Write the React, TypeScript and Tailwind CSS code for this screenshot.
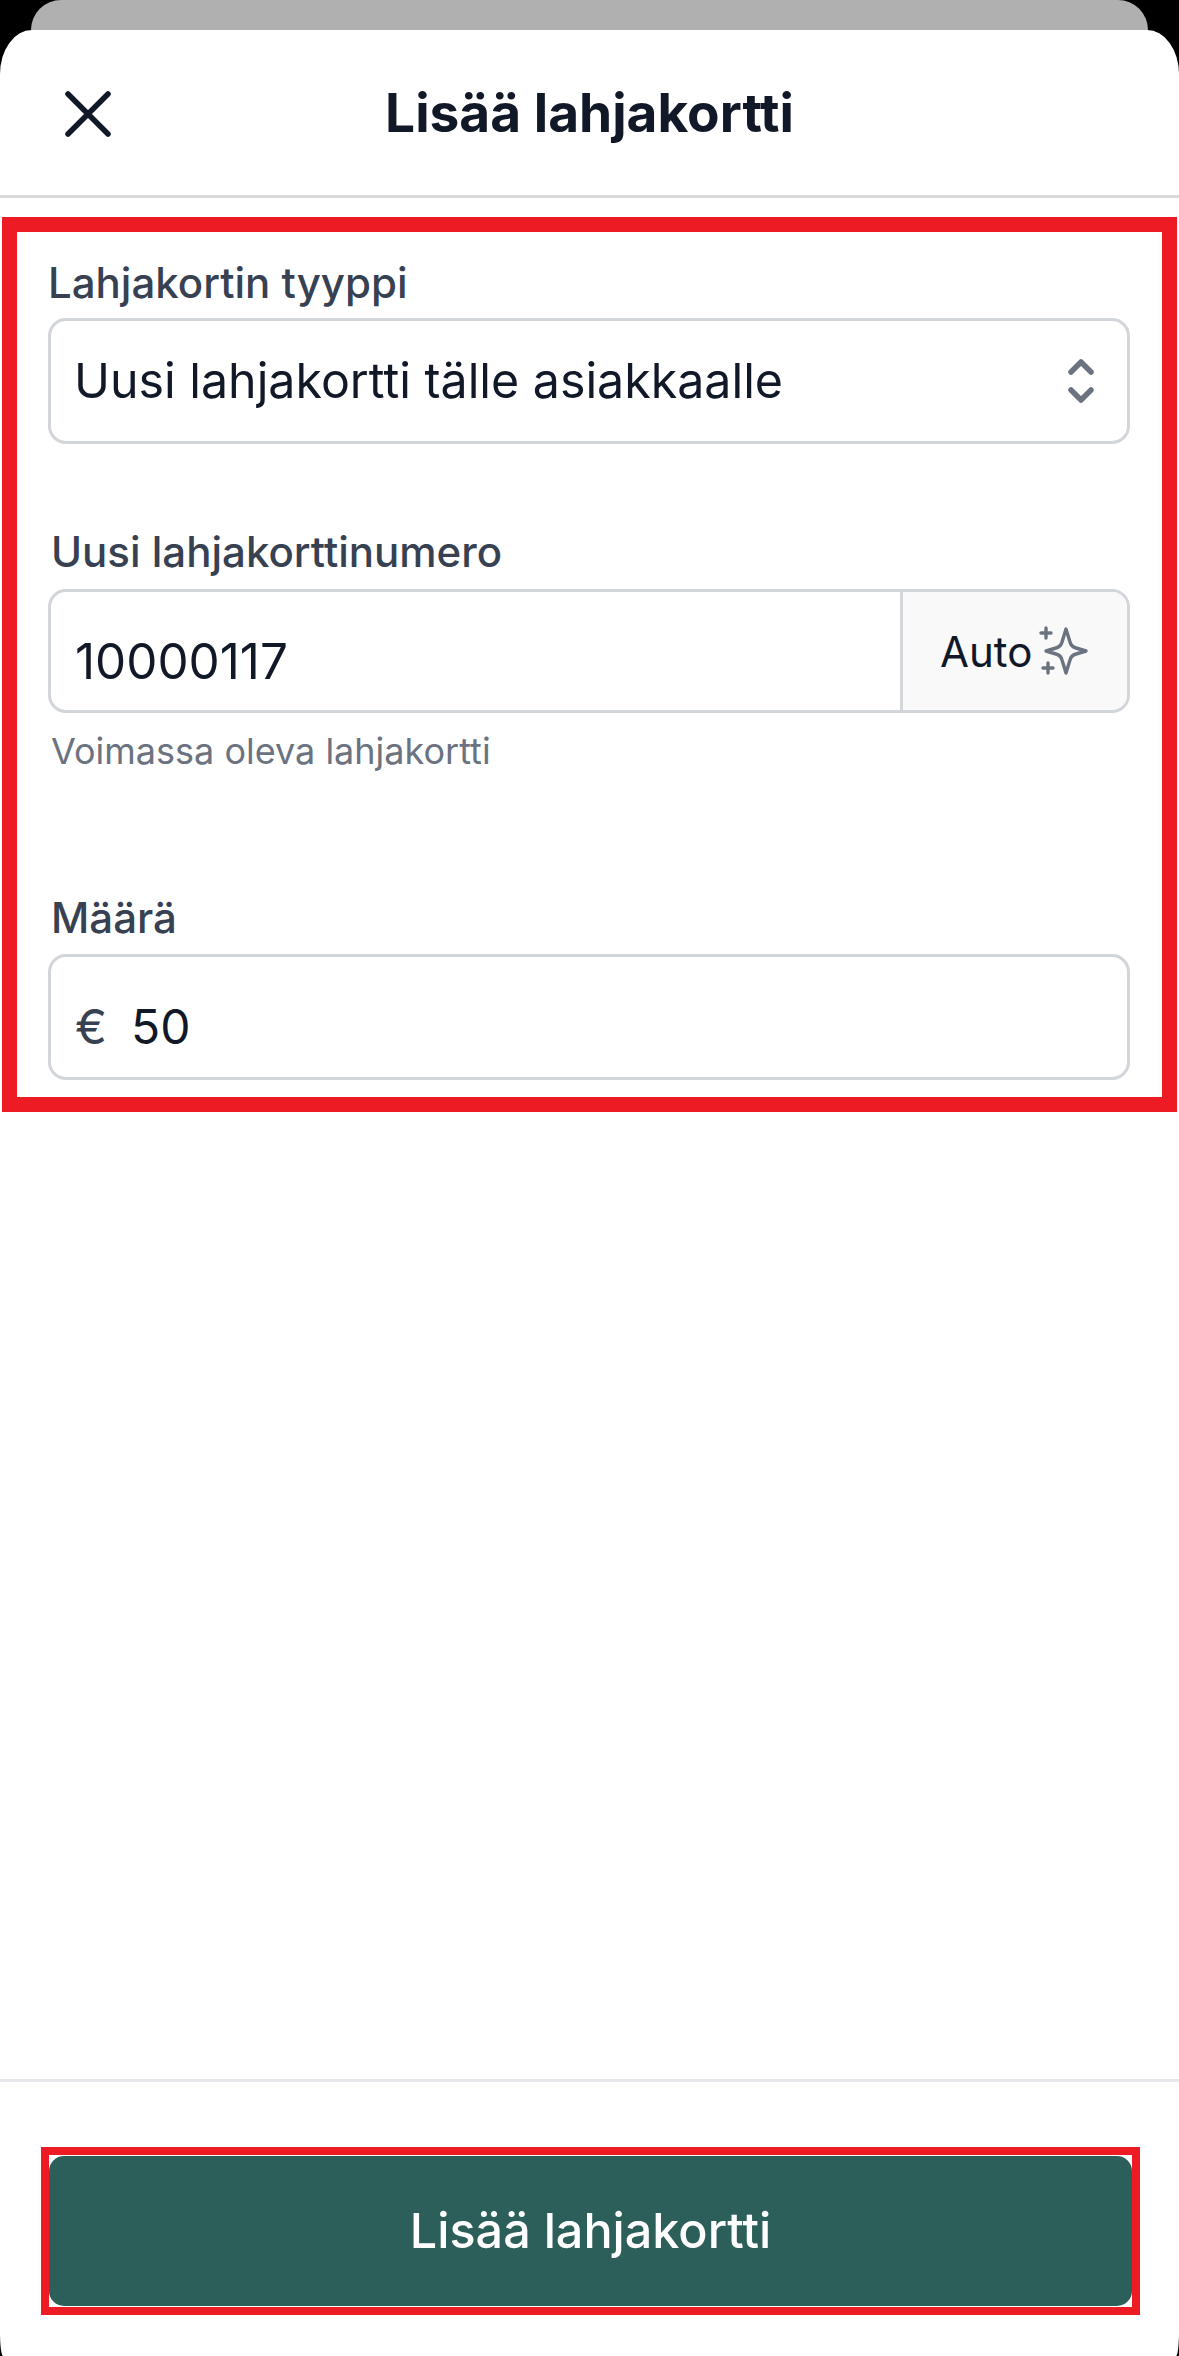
const inter = "font-['Inter',sans-serif]";

function Star() {
  return (
    <svg width="54" height="54" viewBox="0 0 54 54" fill="none" stroke="#6b7280" strokeWidth="3.4" strokeLinecap="round" strokeLinejoin="round" className="absolute left-[134px] top-[33px]">
      <path d="M29 4 L33 17 Q34.2 21.8 39 23 L49 26 L39 29 Q34.2 30.2 33 35 L29 48 L25 35 Q23.8 30.2 19 29 L9 26 L19 23 Q23.8 21.8 25 17 Z" />
      <path d="M9 3 V13 M4 8 H14" />
      <path d="M11 38 V48 M6 43 H16" />
    </svg>
  );
}

export default function App() {
  return (
    <div className={`w-[1179px] h-[2356px] bg-black flex flex-col overflow-hidden ${inter}`}>
      <div className="h-[30px] mx-[31px] bg-[#b0b0b0] rounded-t-[30px] shrink-0" />
      <div className="flex-1 bg-white rounded-tl-[32px_44px] rounded-tr-[32px_44px] rounded-bl-[3px_24px] rounded-br-[3px_24px] flex flex-col">
        <header className="relative h-[168px] shrink-0 border-b-[3px] border-[#d9d9d9] flex items-center justify-center">
          <svg width="60" height="60" viewBox="0 0 60 60" fill="none" stroke="#111827" strokeWidth="5.5" strokeLinecap="round" className="absolute left-[58px] top-[54px]">
            <path d="M10 10 L50 50 M50 10 L10 50" />
          </svg>
          <h1 className="text-[53.2px] leading-[60px] font-bold text-[#111827]">Lisää lahjakortti</h1>
        </header>

        <section className="mt-[19px] mx-[2px] h-[895px] border-[15px] border-[#ed1c24] bg-white shrink-0">
          <div className="pl-[31px] pr-[32px]">
            <label className="block mt-[26px] text-[42px] leading-[50px] font-medium text-[#374151] whitespace-nowrap">Lahjakortin tyyppi</label>
            <div className="mt-[10px] h-[126px] rounded-[18px] border-[3px] border-[#d2d5da] flex items-center justify-between pl-[23px] pr-[33px]">
              <span className="text-[48.3px] leading-[56px] text-[#111827] whitespace-nowrap">Uusi lahjakortti tälle asiakkaalle</span>
              <svg width="26" height="44" viewBox="0 0 26 44" fill="none" stroke="#6b7280" strokeWidth="5.5" strokeLinecap="round" strokeLinejoin="round">
                <path d="M3 13 L13 3 L23 13 M3 31 L13 41 L23 31" />
              </svg>
            </div>

            <label className="block mt-[83px] ml-[3px] text-[42px] leading-[50px] font-medium text-[#374151] whitespace-nowrap">Uusi lahjakorttinumero</label>
            <div className="mt-[12px] h-[124px] rounded-[18px] border-[3px] border-[#d2d5da] flex overflow-hidden">
              <div className="flex-1 pl-[24px] pt-[41px] text-[49.4px] leading-[56px] text-[#111827]">10000117</div>
              <div className="relative w-[227px] border-l-[3px] border-[#d2d5da] bg-[#f9f9fa] pl-[37px] pt-[36px] text-[42px] leading-[48px] text-[#111827]">
                Auto
                <Star />
              </div>
            </div>
            <p className="mt-[17px] ml-[3px] text-[36px] leading-[42px] text-[#6b7280] whitespace-nowrap">Voimassa oleva lahjakortti</p>

            <label className="block mt-[121px] ml-[3px] text-[42px] leading-[50px] font-medium text-[#374151] whitespace-nowrap">Määrä</label>
            <div className="mt-[11px] h-[126px] rounded-[18px] border-[3px] border-[#d2d5da] flex pl-[24px] pt-[42px] text-[48px] leading-[56px]">
              <span className="text-[#374151] w-[56px]">€</span>
              <span className="text-[#111827]">50</span>
            </div>
          </div>
        </section>

        <div className="flex-1" />

        <footer className="h-[277px] shrink-0 border-t-[3px] border-[#e5e7eb] pt-[65px]">
          <div className="ml-[41px] mr-[39px] h-[168px] border-[8px] border-[#ed1c24] bg-white py-px">
            <button className="w-full h-full rounded-[15px] bg-[#2d5f5a] text-white text-[48.5px] leading-[56px] font-medium">Lisää lahjakortti</button>
          </div>
        </footer>
      </div>
    </div>
  );
}
